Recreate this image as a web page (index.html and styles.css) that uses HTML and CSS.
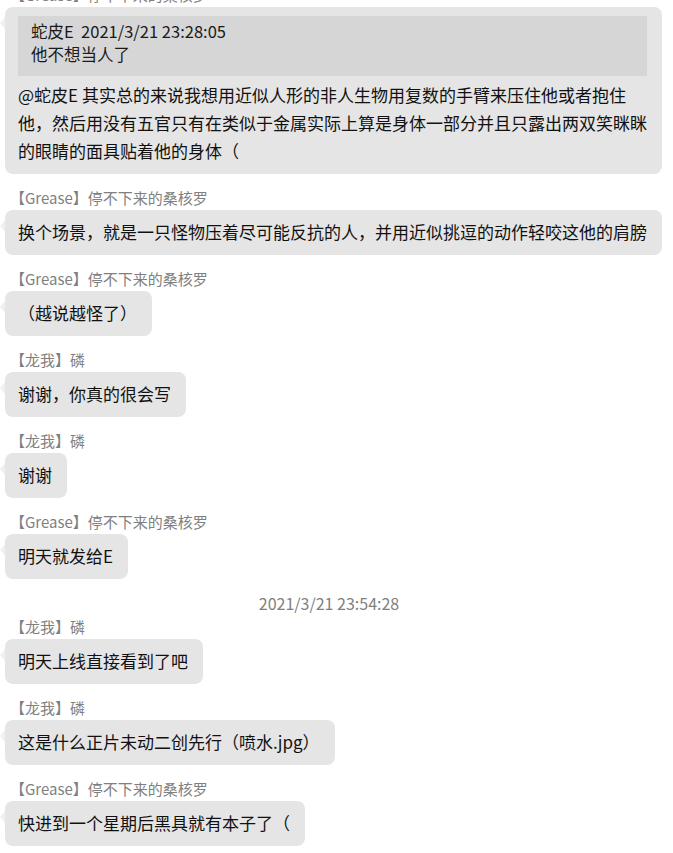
FILE: index.html
```html
<!DOCTYPE html>
<html lang="zh-CN">
<head>
<meta charset="utf-8">
<title>聊天记录</title>
<link rel="stylesheet" href="styles.css">
</head>
<body>
<div class="chat">
  <div class="msg">
    <div class="name">【Grease】停不下来的桑核罗</div>
    <div class="bubble bubble-long">
      <div class="quote">
        <div>蛇皮E&nbsp;&nbsp;2021/3/21 23:28:05</div>
        <div>他不想当人了</div>
      </div>
      <div class="text">@蛇皮E 其实总的来说我想用近似人形的非人生物用复数的手臂来压住他或者抱住他，然后用没有五官只有在类似于金属实际上算是身体一部分并且只露出两双笑眯眯的眼睛的面具贴着他的身体（</div>
    </div>
  </div>
  <div class="msg">
    <div class="name">【Grease】停不下来的桑核罗</div>
    <div class="bubble"><div class="text">换个场景，就是一只怪物压着尽可能反抗的人，并用近似挑逗的动作轻咬这他的肩膀</div></div>
  </div>
  <div class="msg">
    <div class="name">【Grease】停不下来的桑核罗</div>
    <div class="bubble"><div class="text">（越说越怪了）</div></div>
  </div>
  <div class="msg">
    <div class="name">【龙我】磷</div>
    <div class="bubble"><div class="text">谢谢，你真的很会写</div></div>
  </div>
  <div class="msg">
    <div class="name">【龙我】磷</div>
    <div class="bubble"><div class="text">谢谢</div></div>
  </div>
  <div class="msg">
    <div class="name">【Grease】停不下来的桑核罗</div>
    <div class="bubble"><div class="text">明天就发给E</div></div>
  </div>
  <div class="time">2021/3/21 23:54:28</div>
  <div class="msg">
    <div class="name">【龙我】磷</div>
    <div class="bubble"><div class="text">明天上线直接看到了吧</div></div>
  </div>
  <div class="msg">
    <div class="name">【龙我】磷</div>
    <div class="bubble"><div class="text">这是什么正片未动二创先行（喷水.jpg）</div></div>
  </div>
  <div class="msg">
    <div class="name">【Grease】停不下来的桑核罗</div>
    <div class="bubble"><div class="text">快进到一个星期后黑具就有本子了（</div></div>
  </div>
</div>
</body>
</html>
```

FILE: styles.css
```css
html, body {
  margin: 0;
  padding: 0;
  background: #ffffff;
}
body {
  font-family: "Noto Sans CJK SC", "Noto Sans", sans-serif;
  color: #111111;
}
.chat {
  width: 668px;
  margin-top: -15px;
  display: flex;
  flex-direction: column;
  gap: 14px;
}
.msg {
  display: flex;
  flex-direction: column;
  align-items: flex-start;
  padding-left: 5px;
}
.name {
  font-size: 15px;
  line-height: 20px;
  color: #808080;
  padding-left: 5px;
  margin-bottom: 2px;
  white-space: nowrap;
}
.bubble {
  position: relative;
  box-sizing: border-box;
  max-width: 660px;
  background: #e5e5e5;
  border-radius: 8px;
  padding: 8px 15px 9px 13px;
}
.bubble-long {
  width: 657px;
  padding-right: 11px;
}
.bubble::before {
  content: "";
  position: absolute;
  left: -5px;
  top: 10px;
  border-style: solid;
  border-width: 6px 5px 6px 0;
  border-color: transparent #f0f0f0 transparent transparent;
}
.quote {
  background: #d6d6d6;
  margin: 1px 4px 5px 0;
  padding: 4px 13px 10px 13px;
  font-size: 16.5px;
  line-height: 23px;
  color: #1a1a1a;
}
.text {
  font-size: 17px;
  line-height: 28px;
}
.time {
  width: 658px;
  text-align: center;
  font-size: 16px;
  line-height: 20px;
  color: #808080;
  margin-bottom: -10px;
}
```
